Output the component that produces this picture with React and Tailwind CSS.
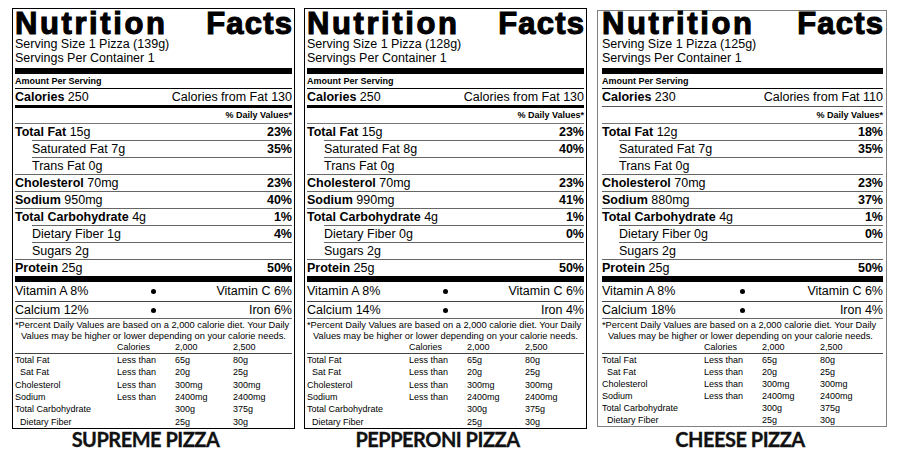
import React from "react";

const LABELS = [
  {
    name: "SUPREME PIZZA",
    serving: "139g",
    cal: "250",
    fatCal: "130",
    rows: [
      { b: "Total Fat", a: "15g", p: "23%" },
      { a: "Saturated Fat 7g", p: "35%", indent: true },
      { a: "Trans Fat 0g", indent: true },
      { b: "Cholesterol", a: "70mg", p: "23%" },
      { b: "Sodium", a: "950mg", p: "40%" },
      { b: "Total Carbohydrate", a: "4g", p: "1%" },
      { a: "Dietary Fiber 1g", p: "4%", indent: true },
      { a: "Sugars 2g", indent: true },
      { b: "Protein", a: "25g", p: "50%" },
    ],
    vitA: "8%", vitC: "6%", calcium: "12%", iron: "6%",
  },
  {
    name: "PEPPERONI PIZZA",
    serving: "128g",
    cal: "250",
    fatCal: "130",
    rows: [
      { b: "Total Fat", a: "15g", p: "23%" },
      { a: "Saturated Fat 8g", p: "40%", indent: true },
      { a: "Trans Fat 0g", indent: true },
      { b: "Cholesterol", a: "70mg", p: "23%" },
      { b: "Sodium", a: "990mg", p: "41%" },
      { b: "Total Carbohydrate", a: "4g", p: "1%" },
      { a: "Dietary Fiber 0g", p: "0%", indent: true },
      { a: "Sugars 2g", indent: true },
      { b: "Protein", a: "25g", p: "50%" },
    ],
    vitA: "8%", vitC: "6%", calcium: "14%", iron: "4%",
  },
  {
    name: "CHEESE PIZZA",
    serving: "125g",
    cal: "230",
    fatCal: "110",
    rows: [
      { b: "Total Fat", a: "12g", p: "18%" },
      { a: "Saturated Fat 7g", p: "35%", indent: true },
      { a: "Trans Fat 0g", indent: true },
      { b: "Cholesterol", a: "70mg", p: "23%" },
      { b: "Sodium", a: "880mg", p: "37%" },
      { b: "Total Carbohydrate", a: "4g", p: "1%" },
      { a: "Dietary Fiber 0g", p: "0%", indent: true },
      { a: "Sugars 2g", indent: true },
      { b: "Protein", a: "25g", p: "50%" },
    ],
    vitA: "8%", vitC: "6%", calcium: "18%", iron: "4%",
  },
];

const DV_TABLE = [
  { n: "Total Fat", l: "Less than", a: "65g", b: "80g" },
  { n: "Sat Fat", l: "Less than", a: "20g", b: "25g", indent: true },
  { n: "Cholesterol", l: "Less than", a: "300mg", b: "300mg" },
  { n: "Sodium", l: "Less than", a: "2400mg", b: "2400mg" },
  { n: "Total Carbohydrate", l: "", a: "300g", b: "375g" },
  { n: "Dietary Fiber", l: "", a: "25g", b: "30g", indent: true },
];

function Label({ d, boxCls, titleCls, calLine, tableRowCls, captionCls }) {
  return (
    <div className="flex flex-col">
      <div className={boxCls}>
        {/* header */}
        <div className={`flex justify-between items-start leading-[26px] text-[31px] font-bold [-webkit-text-stroke:1.1px_black] ${titleCls}`}>
          <span className="tracking-[2.6px]">Nutrition</span>
          <span className="tracking-[1.2px] -mr-[1.2px]">Facts</span>
        </div>
        <div className="text-[12.5px] leading-[14px]">Serving Size 1 Pizza ({d.serving})</div>
        <div className="text-[12.5px] leading-[14px]">Servings Per Container 1</div>
        <div className="mt-[3px] h-[6px] bg-black" />
        <div className="h-[15px] border-b border-black text-[9px] font-bold leading-[14px]">Amount Per Serving</div>
        <div className="flex justify-between h-[16px] text-[12.5px] leading-[16px]">
          <span><b>Calories</b> {d.cal}</span>
          <span>Calories from Fat {d.fatCal}</span>
        </div>
        {calLine}
        <div className="h-[16px] border-b border-[#777] text-right text-[9px] font-bold leading-[15px]">% Daily Values*</div>

        {/* nutrients */}
        {d.rows.map((r, i) => (
          <div
            key={i}
            className={`flex justify-between text-[12.5px] leading-[16px] ${i === 0 ? "h-[16px]" : "h-[17px] border-t border-[#666]"} ${r.indent ? "ml-[17px]" : ""}`}
          >
            <span>
              {r.b && <b>{r.b}</b>}
              {r.b ? " " : ""}
              {r.a}
            </span>
            {r.p && <b>{r.p}</b>}
          </div>
        ))}
        <div className="h-[6px] bg-black" />

        {/* vitamins */}
        <div className="grid grid-cols-3 items-center h-[20px] border-b border-[#444] text-[12.5px] leading-[19px]">
          <span>Vitamin A {d.vitA}</span>
          <span className="flex justify-center"><span className="w-[5px] h-[5px] rounded-full bg-black" /></span>
          <span className="text-right">Vitamin C {d.vitC}</span>
        </div>
        <div className="grid grid-cols-3 items-center h-[17px] border-b border-[#666] text-[12.5px] leading-[16px]">
          <span>Calcium {d.calcium}</span>
          <span className="flex justify-center"><span className="w-[5px] h-[5px] rounded-full bg-black" /></span>
          <span className="text-right">Iron {d.iron}</span>
        </div>

        {/* footnote */}
        <div className="pt-[1px] text-[9.3px] leading-[11px] whitespace-nowrap">
          <div>*Percent Daily Values are based on a 2,000 calorie diet. Your Daily</div>
          <div className="pl-[6px]">Values may be higher or lower depending on your calorie needs.</div>
        </div>
        <div className="grid grid-cols-[102px_58px_58px_1fr] h-[12px] border-b border-[#444] text-[9px] leading-[11px]">
          <span />
          <span>Calories</span>
          <span>2,000</span>
          <span>2,500</span>
        </div>
        {DV_TABLE.map((t) => (
          <div key={t.n} className={`grid grid-cols-[102px_58px_58px_1fr] text-[9px] leading-[12px] items-center ${tableRowCls}`}>
            <span className={t.indent ? "pl-[5px]" : ""}>{t.n}</span>
            <span>{t.l}</span>
            <span>{t.a}</span>
            <span>{t.b}</span>
          </div>
        ))}
      </div>
      <div className={`font-['Lato',sans-serif] font-bold text-[20px] leading-[18px] text-center tracking-[-0.5px] text-[#111] [-webkit-text-stroke:0.3px_#111] ${captionCls}`}>
        {d.name}
      </div>
    </div>
  );
}

export default function App() {
  const medBar = <div className="h-[3px] bg-black" />;
  const thinBar = <div className="h-[3px] flex items-center"><div className="w-full h-[1px] bg-[#555]" /></div>;
  return (
    <div className="w-[898px] h-[457px] overflow-hidden bg-white flex items-start pl-[12px] font-['Liberation_Sans',Arial,sans-serif] text-black">
      <Label
        d={LABELS[0]}
        boxCls="mt-[8px] w-[283px] border border-black px-[2px]"
        titleCls="h-[28px] pt-[2px]"
        calLine={medBar}
        tableRowCls="h-[12.3px]"
        captionCls="pr-[16px] mt-[1px]"
      />
      <div className="ml-[9px]">
        <Label
          d={LABELS[1]}
          boxCls="mt-[8px] w-[283px] border border-black px-[2px]"
          titleCls="h-[28px] pt-[2px]"
          calLine={medBar}
          tableRowCls="h-[12.3px]"
          captionCls="pr-[16px] mt-[1px]"
        />
      </div>
      <div className="ml-[10px]">
        <Label
          d={LABELS[2]}
          boxCls="mt-[10px] w-[290px] border border-[#808080] pl-[4px] pr-[3px]"
          titleCls="h-[26px]"
          calLine={thinBar}
          tableRowCls="h-[12px]"
          captionCls="pr-[4px] mt-[3px]"
        />
      </div>
    </div>
  );
}
